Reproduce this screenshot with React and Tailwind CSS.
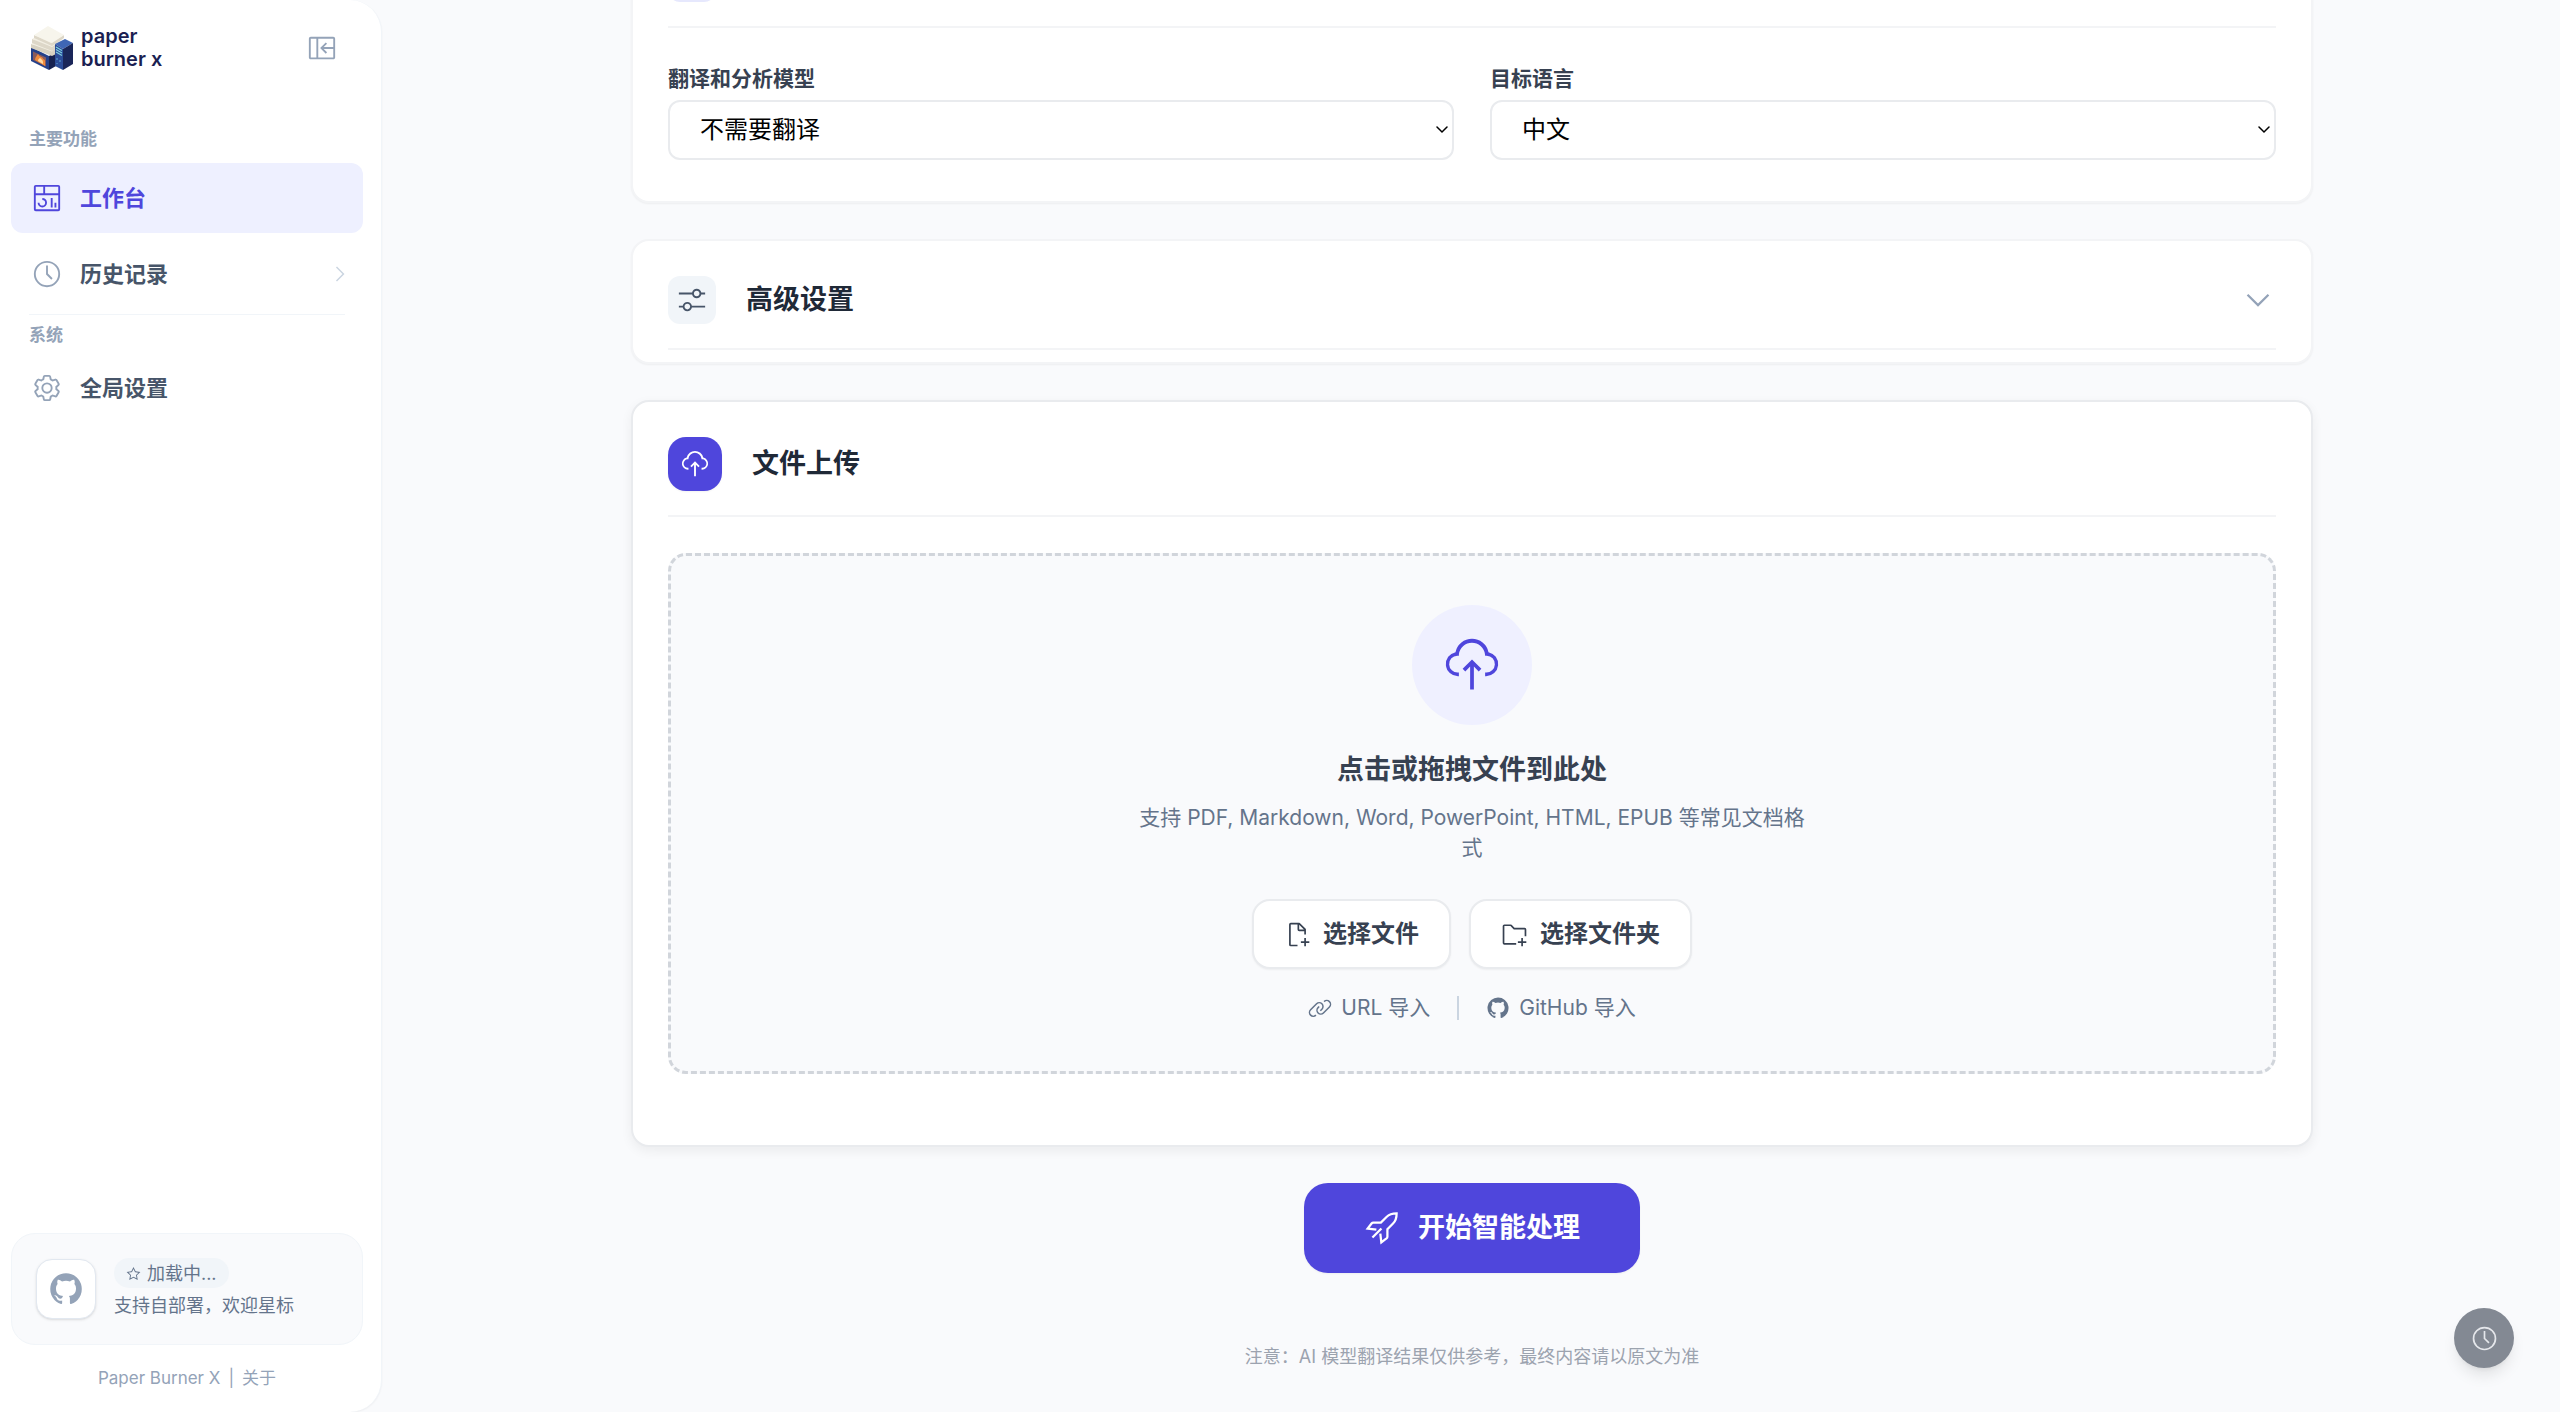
const FONT = "font-['Inter','Noto_Sans_CJK_SC',sans-serif]";

function Icon({ paths, className }) {
  return (
    <svg viewBox="0 0 32 32" fill="currentColor" aria-hidden="true" className={className}>
      {paths.map((d) => (
        <path key={d} d={d} />
      ))}
    </svg>
  );
}

const icons = {
  time: [
    "M16,30A14,14,0,1,1,30,16,14,14,0,0,1,16,30ZM16,4A12,12,0,1,0,28,16,12,12,0,0,0,16,4Z",
    "M20.59 22 15 16.41 15 7 17 7 17 15.58 22 20.59 20.59 22z",
  ],
  chevronDown: ["M16 22 6 12 7.4 10.6 16 19.2 24.6 10.6 26 12z"],
  chevronRight: ["M22 16 12 26 10.6 24.6 19.2 16 10.6 7.4 12 6z"],
  adjust: [
    "M30 8h-4.1c-.5-2.3-2.5-4-4.9-4s-4.4 1.7-4.9 4H2v2h14.1c.5 2.3 2.5 4 4.9 4s4.4-1.7 4.9-4H30V8zM21 12c-1.7 0-3-1.3-3-3s1.3-3 3-3 3 1.3 3 3S22.7 12 21 12zM2 24h4.1c.5 2.3 2.5 4 4.9 4s4.4-1.7 4.9-4H30v-2H15.9c-.5-2.3-2.5-4-4.9-4s-4.4 1.7-4.9 4H2V24zM11 20c1.7 0 3 1.3 3 3s-1.3 3-3 3-3-1.3-3-3S9.3 20 11 20z",
  ],
  cloudUpload: [
    "M11 18 12.41 19.41 15 16.83 15 29 17 29 17 16.83 19.59 19.41 21 18 16 13 11 18z",
    "M23.5,22H23V20h.5a4.5,4.5,0,0,0,.36-9L23,11l-.1-.82a7,7,0,0,0-13.88,0L9,11,8.14,11a4.5,4.5,0,0,0,.36,9H9v2H8.5A6.5,6.5,0,0,1,7.2,9.14a9,9,0,0,1,17.6,0A6.5,6.5,0,0,1,23.5,22Z",
  ],
  documentAdd: [
    "M30 24 26 24 26 20 24 20 24 24 20 24 20 26 24 26 24 30 26 30 26 26 30 26 30 24z",
    "M16,28H8V4h8v6a2,2,0,0,0,2,2h6v4h2V10a.91.91,0,0,0-.3-.7l-7-7A.91.91,0,0,0,18,2H8A2,2,0,0,0,6,4V28a2,2,0,0,0,2,2h8ZM18,4.4,23.6,10H18Z",
  ],
  folderAdd: [
    "M26 20 24 20 24 24 20 24 20 26 24 26 24 30 26 30 26 26 30 26 30 24 26 24z",
    "M28,8H16l-3.41-3.41A2,2,0,0,0,11.17,4H4A2,2,0,0,0,2,6V26a2,2,0,0,0,2,2H18V26H4V6h7.17l3.41,3.41.59.59H28v8h2V10A2,2,0,0,0,28,8Z",
  ],
  link: [
    "M29.25,6.76a6,6,0,0,0-8.5,0l1.42,1.42a4,4,0,1,1,5.67,5.67l-8,8a4,4,0,1,1-5.67-5.66l1.41-1.42-1.41-1.42-1.42,1.42a6,6,0,0,0,0,8.5A6,6,0,0,0,17,25a6,6,0,0,0,4.27-1.76l8-8A6,6,0,0,0,29.25,6.76Z",
    "M4.19,24.82a4,4,0,0,1,0-5.67l8-8a4,4,0,0,1,5.67,0A3.94,3.94,0,0,1,19,14a4,4,0,0,1-1.17,2.85L15.71,19l1.42,1.42,2.12-2.12a6,6,0,0,0-8.51-8.51l-8,8a6,6,0,0,0,0,8.51A6,6,0,0,0,7,28a6.07,6.07,0,0,0,4.28-1.76L9.86,24.82A4,4,0,0,1,4.19,24.82Z",
  ],
  github: [
    "M16,2a14,14,0,0,0-4.43,27.28c.7.13,1-.3,1-.67s0-1.21,0-2.38c-3.89.84-4.71-1.88-4.71-1.88A3.71,3.71,0,0,0,6.24,22.3c-1.27-.86.1-.85.1-.85A2.94,2.94,0,0,1,8.48,22.9a3,3,0,0,0,4.08,1.16,2.93,2.93,0,0,1,.88-1.87c-3.1-.36-6.37-1.56-6.37-6.92a5.4,5.4,0,0,1,1.44-3.76,5,5,0,0,1,.14-3.7s1.17-.38,3.85,1.43a13.3,13.3,0,0,1,7,0c2.67-1.81,3.84-1.43,3.84-1.43a5,5,0,0,1,.14,3.7,5.4,5.4,0,0,1,1.44,3.76c0,5.38-3.27,6.56-6.39,6.91a3.33,3.33,0,0,1,.95,2.59c0,1.87,0,3.38,0,3.84s.25.81,1,.67A14,14,0,0,0,16,2Z",
  ],
  star: [
    "M16,6.52l2.76,5.58.46,1,1,.15,6.16.89L22,18.44l-.75.73.18,1,1.05,6.13-5.51-2.89L16,23l-.93.49L9.56,26.34l1-6.13.18-1L10,18.44,5.58,14.09l6.16-.89,1-.15.46-1L16,6.52M16,2l-4.55,9.22L1.28,12.69l7.36,7.18L6.9,30,16,25.22,25.1,30,23.36,19.87l7.36-7.17L20.55,11.22Z",
  ],
  dashboard: [
    "M24,21h2v5h-2zM20,16h2v10h-2z",
    "M11,26a5,5,0,0,1-5-5H8a3,3,0,1,0,3-3V16a5,5,0,0,1,0,10Z",
    "M28,2H4A2,2,0,0,0,2,4V28a2,2,0,0,0,2,2H28a2,2,0,0,0,2-2V4A2,2,0,0,0,28,2Zm0,9H14V4H28ZM12,4v7H4V4ZM4,28V13H28V28Z",
  ],
  panelClose: [
    "M28,4H4C2.9,4,2,4.9,2,6v20c0,1.1,.9,2,2,2h24c1.1,0,2-.9,2-2V6C30,4.9,29.1,4,28,4z M10,26H4V6h6V26z M28,15H17.8l3.6-3.6L20,10l-6,6l6,6l1.4-1.4L17.8,17H28v9H12V6h16V15z",
  ],
  settings: [
    "M27,16.76c0-.25,0-.5,0-.76s0-.51,0-.77l1.92-1.68A2,2,0,0,0,29.3,11L26.94,7a2,2,0,0,0-1.73-1,2,2,0,0,0-.64.1l-2.43.82a11.35,11.35,0,0,0-1.31-.75l-.51-2.52a2,2,0,0,0-2-1.61H13.64a2,2,0,0,0-2,1.61l-.51,2.52a11.48,11.48,0,0,0-1.32.75L7.43,6.06A2,2,0,0,0,6.79,6,2,2,0,0,0,5.06,7L2.7,11a2,2,0,0,0,.41,2.51L5,15.24c0,.25,0,.5,0,.76s0,.51,0,.77L3.11,18.45A2,2,0,0,0,2.7,21L5.06,25a2,2,0,0,0,1.73,1,2,2,0,0,0,.64-.1l2.43-.82a11.35,11.35,0,0,0,1.31.75l.51,2.52a2,2,0,0,0,2,1.61h4.72a2,2,0,0,0,2-1.61l.51-2.52a11.48,11.48,0,0,0,1.32-.75l2.42.82a2,2,0,0,0,.64.1,2,2,0,0,0,1.73-1L29.3,21a2,2,0,0,0-.41-2.51ZM25.21,24l-3.43-1.16a8.86,8.86,0,0,1-2.71,1.57L18.36,28H13.64l-.71-3.55a9.36,9.36,0,0,1-2.7-1.57L6.79,24,4.43,20l2.72-2.4a8.9,8.9,0,0,1,0-3.13L4.43,12,6.79,8l3.43,1.16a8.86,8.86,0,0,1,2.71-1.57L13.64,4h4.72l.71,3.55a9.36,9.36,0,0,1,2.7,1.57L25.21,8,27.57,12l-2.72,2.4a8.9,8.9,0,0,1,0,3.13L27.57,20Z",
    "M16,22a6,6,0,1,1,6-6A5.94,5.94,0,0,1,16,22Zm0-10a3.91,3.91,0,0,0-4,4,3.91,3.91,0,0,0,4,4,3.91,3.91,0,0,0,4-4A3.91,3.91,0,0,0,16,12Z",
  ],
};

function Rocket() {
  return (
    <svg viewBox="0 0 32 32" fill="none" stroke="currentColor" strokeWidth="2" aria-hidden="true" className="size-9">
      <path d="M11 17.5 3.2 16.6 6.7 12c.4-.5 1-.8 1.6-.8H15l5-5C22.5 3.7 26 3 29 3c0 3-.7 6.5-3.2 9L20.8 17v6.7c0 .6-.3 1.2-.8 1.6l-4.6 3.5-.9-7.8" />
      <path d="M7.5 24.5 15.5 16.5" />
    </svg>
  );
}

function LogoMark() {
  return (
    <svg viewBox="0 0 42 44" aria-hidden="true" className="h-11 w-[42px]">
      <path d="M0 21 18 30v14L0 35z" fill="#24408a" />
      <path d="M18 30l7-4v14l-7 4z" fill="#16214f" />
      <path d="M2 25.5l13 6v9L2 34z" fill="#8a5a5c" />
      <path d="M4 34c0-3 2-4 3-6 1 2 2 2 3 3 1 0 2 1 2 2 1 0 2 1 2 2v5z" fill="#f08a3c" />
      <path d="M7 35c0-2 1-2 2-3 1 1 3 2 3 4v2z" fill="#ffd9a0" />
      <path d="M0 18v4l21 8 4-2v-5z" fill="#d8d2c2" />
      <path d="M0 18 16 9l14 6-9 10.5z" fill="#f3efe3" />
      <path d="M1 13v4l20 8 4-2v-5z" fill="#ddd7c8" />
      <path d="M1 13 16 5l16 8-11 8z" fill="#f3efe3" />
      <path d="M3 9v3l18 8 12-8V9l-13 8z" fill="#ddd7c8" />
      <path d="M3 9 17 0l16 9-12 8z" fill="#f7f5ec" />
      <path d="M24 18 34 13l8 4-10 6z" fill="#3f66b5" />
      <path d="M24 18l8 5v21l-8-4z" fill="#2b4c98" />
      <path d="M32 23l10-6v21l-10 6z" fill="#1a2659" />
      <path d="M25 21l6 3.5M25 23.5l6 3.5M25 26l6 3.5" stroke="#7fd0de" strokeWidth="1.2" />
      <path d="M26 32v2M29 34v2M26 37v1" stroke="#5fa6cf" strokeWidth="1" />
    </svg>
  );
}

function NavItem({ icon, label, active, chevron }) {
  return (
    <a
      href="#"
      aria-current={active ? "page" : undefined}
      className={
        active
          ? "flex h-[70px] items-center gap-[18px] rounded-xl bg-[#eef0ff] px-[21px] text-[#4f46dc]"
          : "flex h-[70px] items-center gap-[18px] rounded-xl px-[21px] text-[#475569]"
      }
    >
      <Icon paths={icon} className={active ? "size-[30px]" : "size-[30px] text-[#94a3b8]"} />
      <span className="text-[22px] font-semibold">{label}</span>
      {chevron && <Icon paths={icons.chevronRight} className="-mr-2.5 ml-auto size-6 text-[#cbd5e1]" />}
    </a>
  );
}

function Sidebar() {
  return (
    <aside className="mr-0.5 flex w-[382px] shrink-0 flex-col rounded-r-[32px] border-r border-slate-100 bg-white pr-[18px] pl-[11px] shadow-xs">
      <header className="flex h-24 items-center pl-5 pr-[26px]">
        <LogoMark />
        <div className="ml-2 text-[20px] leading-[23px] font-semibold text-[#1b1f52]">
          paper
          <br />
          burner x
        </div>
        <button type="button" aria-label="收起侧边栏" className="ml-auto text-[#94a3b8]">
          <Icon paths={icons.panelClose} className="size-[30px]" />
        </button>
      </header>
      <nav className="flex flex-col pt-[31px]">
        <h2 className="pl-[18px] text-[17px] leading-6 font-semibold text-[#94a3b8]">主要功能</h2>
        <div className="mt-3 flex flex-col gap-1.5">
          <NavItem icon={icons.dashboard} label="工作台" active />
          <NavItem icon={icons.time} label="历史记录" chevron />
        </div>
        <hr className="mx-[18px] mt-[5px] border-slate-100" />
        <h2 className="mt-2 pl-[18px] text-[17px] leading-6 font-semibold text-[#94a3b8]">系统</h2>
        <div className="mt-1.5">
          <NavItem icon={icons.settings} label="全局设置" />
        </div>
      </nav>
      <a
        href="#"
        className="mt-auto flex h-[112px] items-center gap-[18px] rounded-3xl border border-slate-100 bg-[#f9fafc] px-6"
      >
        <span className="flex size-[60px] items-center justify-center rounded-2xl border border-slate-200 bg-white text-[#94a3b8] shadow-sm">
          <Icon paths={icons.github} className="size-9" />
        </span>
        <span className="flex flex-col items-start text-[18px] text-[#64748b]">
          <span className="flex h-[30px] items-center gap-1.5 rounded-full bg-slate-100 px-3">
            <Icon paths={icons.star} className="size-[15px]" />
            加载中...
          </span>
          <span className="mt-1 leading-7">支持自部署，欢迎星标</span>
        </span>
      </a>
      <footer className="flex h-[67px] items-center justify-center gap-2 text-[17px] text-[#94a3b8]">
        <a href="#">Paper Burner X</a>
        <span>|</span>
        <a href="#">关于</a>
      </footer>
    </aside>
  );
}

function SelectField({ id, label, value }) {
  return (
    <div className="flex flex-col">
      <label htmlFor={id} className="mb-1.5 text-[21px] leading-[30px] font-semibold text-[#374151]">
        {label}
      </label>
      <div className="relative">
        <select
          id={id}
          className="h-[60px] w-full appearance-none rounded-xl border-2 border-[#e9ebee] bg-white px-[30px] text-[24px] text-black"
        >
          <option>{value}</option>
        </select>
        <svg
          viewBox="0 0 12 8"
          fill="none"
          stroke="black"
          strokeWidth="1.5"
          aria-hidden="true"
          className="pointer-events-none absolute top-[26px] right-1.5 h-2 w-3"
        >
          <path d="M1 1l5 5 5-5" strokeLinecap="round" />
        </svg>
      </div>
    </div>
  );
}

function ModelCard() {
  return (
    <section className="rounded-[18px] border-2 border-gray-100 bg-white px-[35px] pt-[34px] pb-[41px] shadow-xs">
      <div className="border-b-2 border-gray-100 pb-6">
        <div className="size-12 rounded-xl border-2 border-[#e6e8fd] bg-[#eef0ff]" />
      </div>
      <div className="mt-9 grid grid-cols-2 gap-9">
        <SelectField id="model" label="翻译和分析模型" value="不需要翻译" />
        <SelectField id="language" label="目标语言" value="中文" />
      </div>
    </section>
  );
}

function AdvancedCard() {
  return (
    <section className="mt-9 rounded-[18px] border-2 border-gray-100 bg-white px-[35px] pt-[35px] pb-3 shadow-xs">
      <button type="button" aria-expanded="false" className="flex w-full items-center border-b-2 border-gray-100 pb-6">
        <span className="flex size-12 items-center justify-center rounded-xl bg-slate-100 text-[#475569]">
          <Icon paths={icons.adjust} className="size-[30px]" />
        </span>
        <span className="ml-[30px] text-[27px] leading-9 font-semibold text-[#1f2937]">高级设置</span>
        <Icon paths={icons.chevronDown} className="ml-auto size-9 text-[#94a3b8]" />
      </button>
    </section>
  );
}

function DropZone() {
  return (
    <div className="mt-9 flex flex-col items-center rounded-[18px] border-3 border-dashed border-[#d1d5db] bg-[#f9fafc] pt-[49px] pb-12">
      <div className="flex size-[120px] items-center justify-center rounded-full bg-[#eff0ff] text-[#4f46dc]">
        <Icon paths={icons.cloudUpload} className="size-[60px]" />
      </div>
      <h3 className="mt-6 text-[27px] leading-[42px] font-semibold text-[#374151]">点击或拖拽文件到此处</h3>
      <p className="mt-3 max-w-[672px] text-center text-[21px] leading-[30px] text-[#64748b]">
        支持 PDF, Markdown, Word, PowerPoint, HTML, EPUB 等常见文档格式
      </p>
      <div className="mt-9 flex gap-[18px]">
        <button
          type="button"
          className="flex h-[70px] items-center gap-3 rounded-[18px] border-2 border-[#e9ebee] bg-white px-[30px] text-[24px] font-semibold text-[#374151] shadow-xs"
        >
          <Icon paths={icons.documentAdd} className="size-[27px]" />
          选择文件
        </button>
        <button
          type="button"
          className="flex h-[70px] items-center gap-3 rounded-[18px] border-2 border-[#e9ebee] bg-white px-[30px] text-[24px] font-semibold text-[#374151] shadow-xs"
        >
          <Icon paths={icons.folderAdd} className="size-[27px]" />
          选择文件夹
        </button>
      </div>
      <div className="mt-6 flex items-center text-[21px] leading-[30px] text-[#64748b]">
        <button type="button" className="flex items-center gap-[9px]">
          <Icon paths={icons.link} className="size-6" />
          URL 导入
        </button>
        <span className="mx-[27px] h-6 w-0.5 bg-[#cbd5e1]" />
        <button type="button" className="flex items-center gap-[9px]">
          <Icon paths={icons.github} className="size-6" />
          GitHub 导入
        </button>
      </div>
    </div>
  );
}

function UploadCard() {
  return (
    <section className="mt-9 rounded-[18px] border-2 border-[#e9ebee] bg-white px-[35px] pt-[35px] pb-[71px] shadow-[0_4px_12px_rgba(0,0,0,0.06)]">
      <div className="flex items-center border-b-2 border-gray-100 pb-6">
        <span className="flex size-[54px] items-center justify-center rounded-[18px] bg-[#4f46dc] text-white shadow-xs">
          <Icon paths={icons.cloudUpload} className="size-[30px]" />
        </span>
        <h2 className="ml-[30px] text-[27px] leading-9 font-semibold text-[#1f2937]">文件上传</h2>
      </div>
      <DropZone />
    </section>
  );
}

export default function App() {
  return (
    <div className={`flex h-screen overflow-hidden bg-[#f9fafc] ${FONT}`}>
      <Sidebar />
      <main className="flex min-w-0 flex-1 justify-center">
        <div className="-mt-[82px] flex w-full max-w-[1682px] flex-col">
          <ModelCard />
          <AdvancedCard />
          <UploadCard />
          <button
            type="button"
            className="mt-9 flex h-[90px] items-center gap-[18px] self-center rounded-3xl bg-[#4f46dc] px-[60px] text-[27px] font-bold text-white shadow-xs"
          >
            <Rocket />
            开始智能处理
          </button>
          <p className="mt-[70px] text-center text-[18px] leading-7 text-[#9ca3af]">
            注意：AI 模型翻译结果仅供参考，最终内容请以原文为准
          </p>
        </div>
      </main>
      <button
        type="button"
        aria-label="处理历史"
        className="fixed right-[46px] bottom-11 flex size-[60px] items-center justify-center rounded-full bg-[#838993] text-gray-200 shadow-lg"
      >
        <Icon paths={icons.time} className="size-[27px]" />
      </button>
    </div>
  );
}
